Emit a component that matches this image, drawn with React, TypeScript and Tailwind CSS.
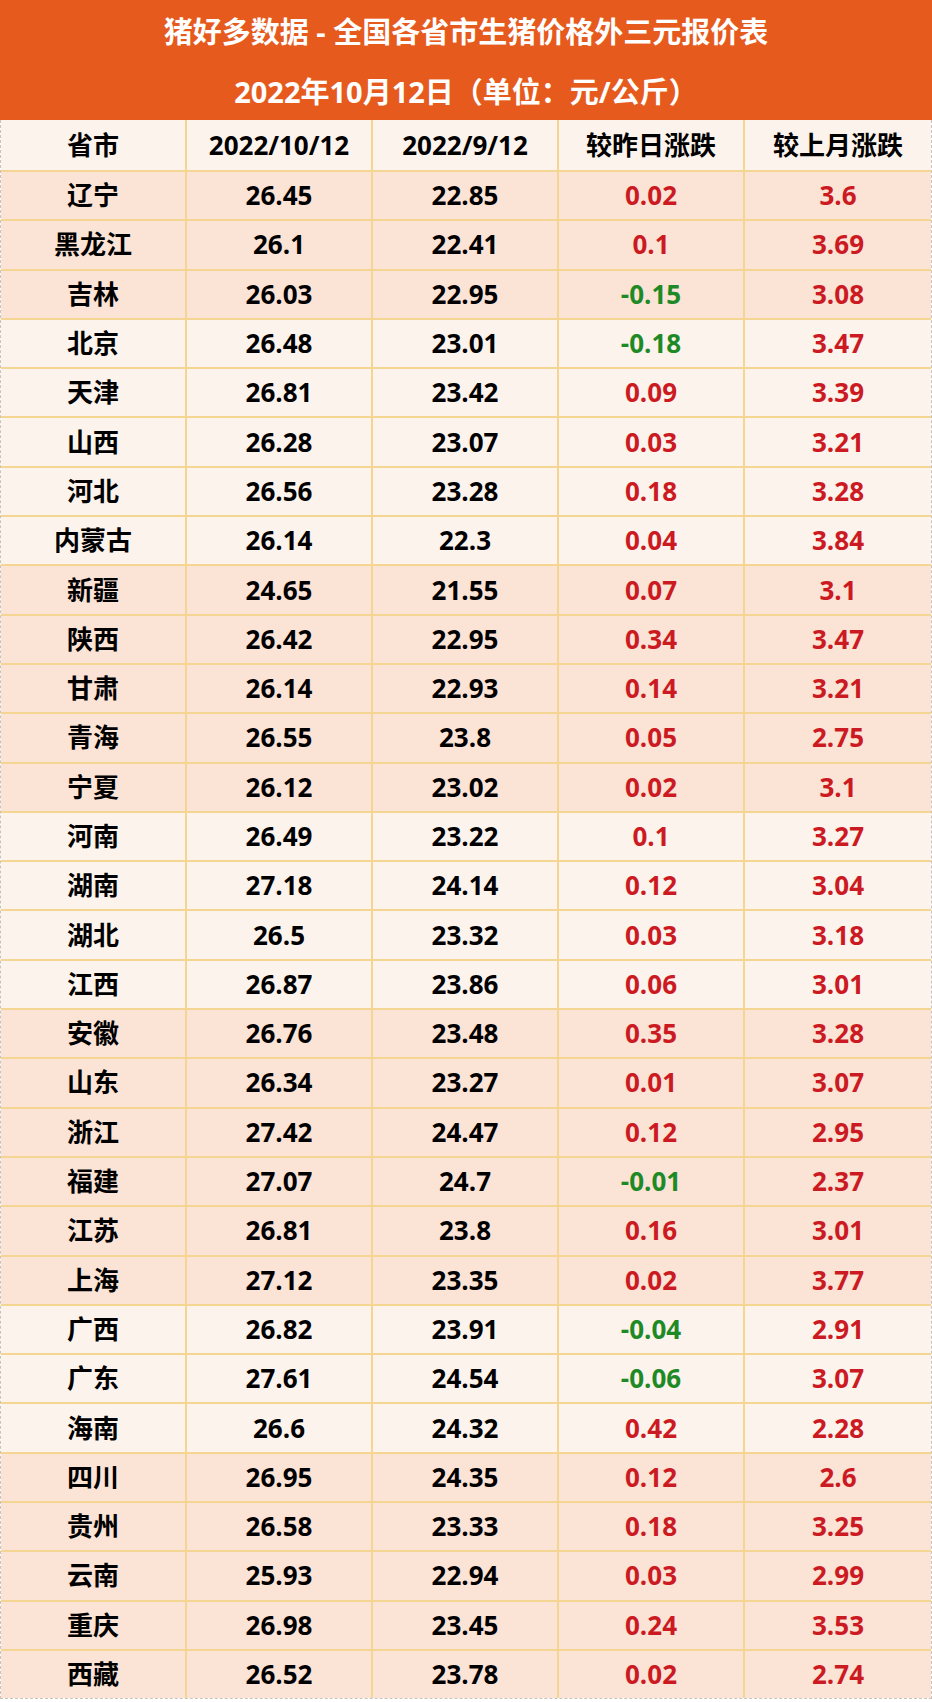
const rows: [string, string, string, string, string, number][] = [
  ['辽宁', '26.45', '22.85', '0.02', '3.6', 0],
  ['黑龙江', '26.1', '22.41', '0.1', '3.69', 0],
  ['吉林', '26.03', '22.95', '-0.15', '3.08', 0],
  ['北京', '26.48', '23.01', '-0.18', '3.47', 1],
  ['天津', '26.81', '23.42', '0.09', '3.39', 1],
  ['山西', '26.28', '23.07', '0.03', '3.21', 1],
  ['河北', '26.56', '23.28', '0.18', '3.28', 1],
  ['内蒙古', '26.14', '22.3', '0.04', '3.84', 1],
  ['新疆', '24.65', '21.55', '0.07', '3.1', 0],
  ['陕西', '26.42', '22.95', '0.34', '3.47', 0],
  ['甘肃', '26.14', '22.93', '0.14', '3.21', 0],
  ['青海', '26.55', '23.8', '0.05', '2.75', 0],
  ['宁夏', '26.12', '23.02', '0.02', '3.1', 0],
  ['河南', '26.49', '23.22', '0.1', '3.27', 1],
  ['湖南', '27.18', '24.14', '0.12', '3.04', 1],
  ['湖北', '26.5', '23.32', '0.03', '3.18', 1],
  ['江西', '26.87', '23.86', '0.06', '3.01', 1],
  ['安徽', '26.76', '23.48', '0.35', '3.28', 0],
  ['山东', '26.34', '23.27', '0.01', '3.07', 0],
  ['浙江', '27.42', '24.47', '0.12', '2.95', 0],
  ['福建', '27.07', '24.7', '-0.01', '2.37', 0],
  ['江苏', '26.81', '23.8', '0.16', '3.01', 0],
  ['上海', '27.12', '23.35', '0.02', '3.77', 0],
  ['广西', '26.82', '23.91', '-0.04', '2.91', 1],
  ['广东', '27.61', '24.54', '-0.06', '3.07', 1],
  ['海南', '26.6', '24.32', '0.42', '2.28', 1],
  ['四川', '26.95', '24.35', '0.12', '2.6', 0],
  ['贵州', '26.58', '23.33', '0.18', '3.25', 0],
  ['云南', '25.93', '22.94', '0.03', '2.99', 0],
  ['重庆', '26.98', '23.45', '0.24', '3.53', 0],
  ['西藏', '26.52', '23.78', '0.02', '2.74', 0],
]

const font = { fontFamily: '"Open Sans", "Noto Sans CJK SC", sans-serif' }

function Cell({ children, className = '' }: { children: React.ReactNode; className?: string }) {
  return (
    <div className={`flex items-center justify-center border-r-2 border-[#f4d592] last:border-r-0 ${className}`}>
      {children}
    </div>
  )
}

export default function App() {
  return (
    <div className="w-[932px] bg-white font-bold" style={font}>
      {/* Title band */}
      <div className="flex h-[120px] flex-col bg-[#e65a1e] text-[29px] text-white">
        <div className="flex h-[64px] items-center justify-center">猪好多数据 - 全国各省市生猪价格外三元报价表</div>
        <div className="flex h-[56px] items-center justify-center">2022年10月12日（单位：元/公斤）</div>
      </div>

      <div className="border-x border-b border-dashed border-[#c9c2bd]">
        {/* Column header */}
        <div className="grid h-[50px] grid-cols-5 bg-[#fcf3ec] text-[26px] text-black">
          <Cell>省市</Cell>
          <Cell>2022/10/12</Cell>
          <Cell>2022/9/12</Cell>
          <Cell>较昨日涨跌</Cell>
          <Cell>较上月涨跌</Cell>
        </div>

        {rows.map(([name, a, b, day, month, light]) => (
          <div
            key={name}
            className={`grid h-[49.3px] grid-cols-5 border-t-2 border-[#f4d592] text-[26px] ${
              light ? 'bg-[#fcf3ed]' : 'bg-[#fbe3d6]'
            }`}
          >
            <Cell className="text-black">{name}</Cell>
            <Cell className="text-black">{a}</Cell>
            <Cell className="text-black">{b}</Cell>
            <Cell className={day.startsWith('-') ? 'text-[#1e8a26]' : 'text-[#cc1a22]'}>{day}</Cell>
            <Cell className="text-[#cc1a22]">{month}</Cell>
          </div>
        ))}
      </div>
    </div>
  )
}
